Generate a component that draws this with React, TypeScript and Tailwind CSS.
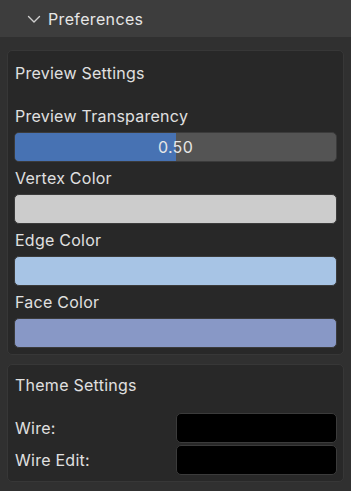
import { ReactNode } from "react";

function Label({ children }: { children: ReactNode }) {
  return (
    <div className="h-[32px] flex items-center pl-[1px] text-[16px] tracking-[0.25px] text-[#e0e0e0]">
      {children}
    </div>
  );
}

function Swatch({ color }: { color: string }) {
  return (
    <div
      className="h-[30px] w-full rounded-[5px] border border-[#3b3b3b]"
      style={{ backgroundColor: color }}
    />
  );
}

function Slider({ value }: { value: number }) {
  return (
    <div className="relative h-[30px] w-full rounded-[5px] border border-[#3b3b3b] bg-[#545454] overflow-hidden">
      <div className="h-full bg-[#4772b3]" style={{ width: `${value * 100}%` }} />
      <div className="absolute inset-0 flex items-center justify-center text-[16px] tracking-[0.3px] text-[#e6e6e6]">
        {value.toFixed(2)}
      </div>
    </div>
  );
}

export default function App() {
  return (
    <div
      className="w-[351px] h-[491px] bg-[#303030] overflow-hidden"
      style={{ fontFamily: "Inter, 'Noto Sans', sans-serif" }}
    >
      <div className="h-[37px] bg-[#3d3d3d] flex items-center pl-[27px] gap-[7px]">
        <svg width="14" height="14" viewBox="0 0 14 14" className="mt-[1px]">
          <path
            d="M1.5 4.5 L7 10 L12.5 4.5"
            fill="none"
            stroke="#cfcfcf"
            strokeWidth="1.4"
            strokeLinecap="round"
            strokeLinejoin="round"
          />
        </svg>
        <span className="text-[16px] tracking-[0.35px] text-[#e6e6e6]">Preferences</span>
      </div>

      <div className="px-[7px] pt-[13px] flex flex-col gap-[9px]">
        <div className="rounded-[5px] border border-[#373737] bg-[#282828] px-[6px] pb-[6px]">
          <div className="h-[43px] flex items-center pl-[1px] text-[16px] tracking-[0.25px] text-[#e0e0e0]">
            Preview Settings
          </div>
          <div className="h-[6px]" />
          <Label>Preview Transparency</Label>
          <Slider value={0.5} />
          <Label>Vertex Color</Label>
          <Swatch color="#cccccc" />
          <Label>Edge Color</Label>
          <Swatch color="#a7c4e5" />
          <Label>Face Color</Label>
          <Swatch color="#8898c6" />
        </div>

        <div className="rounded-[5px] border border-[#373737] bg-[#282828] px-[6px] pb-[6px]">
          <div className="h-[40px] flex items-center pl-[1px] text-[16px] tracking-[0.25px] text-[#e0e0e0]">
            Theme Settings
          </div>
          <div className="h-[8px]" />
          <div className="flex flex-col gap-[2px]">
            <div className="flex items-center">
              <div className="w-1/2 pl-[1px] text-[16px] tracking-[0.25px] text-[#e0e0e0]">Wire:</div>
              <div className="w-1/2">
                <Swatch color="#000000" />
              </div>
            </div>
            <div className="flex items-center">
              <div className="w-1/2 pl-[1px] text-[16px] tracking-[0.25px] text-[#e0e0e0]">Wire Edit:</div>
              <div className="w-1/2">
                <Swatch color="#000000" />
              </div>
            </div>
          </div>
        </div>
      </div>
    </div>
  );
}
